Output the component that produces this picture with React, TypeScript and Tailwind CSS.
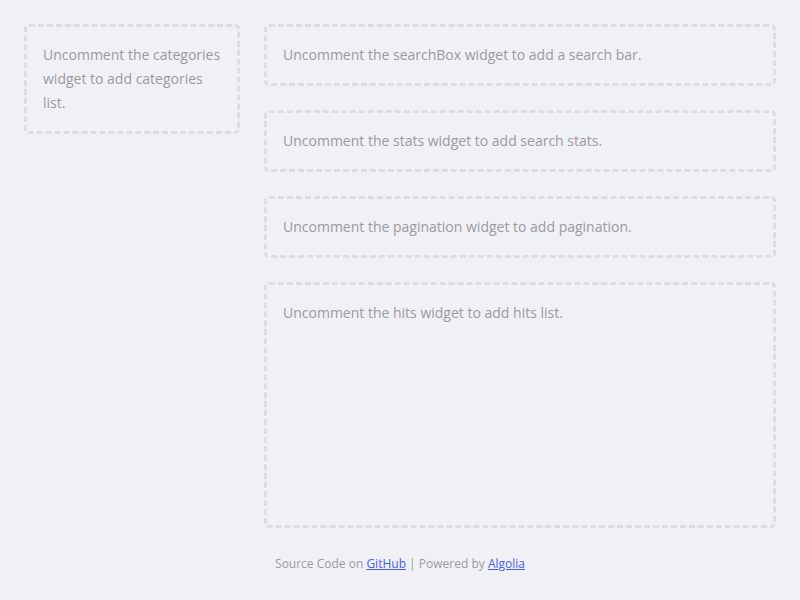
const Placeholder = ({ children, className = "" }: { children: React.ReactNode; className?: string }) => (
  <div
    className={`rounded-[5px] border-[3px] border-dashed border-[#dcdde2] p-4 text-sm leading-6 text-[#9a9aa0] ${className}`}
  >
    {children}
  </div>
);

export default function App() {
  return (
    <div
      className="min-h-screen bg-[#f0f1f5] p-6"
      style={{ fontFamily: '"Open Sans", "Noto Sans", sans-serif' }}
    >
      <div className="flex gap-6">
        <div className="w-[216px] shrink-0">
          <Placeholder>Uncomment the categories widget to add categories list.</Placeholder>
        </div>
        <div className="flex flex-1 flex-col gap-6">
          <Placeholder>Uncomment the searchBox widget to add a search bar.</Placeholder>
          <Placeholder>Uncomment the stats widget to add search stats.</Placeholder>
          <Placeholder>Uncomment the pagination widget to add pagination.</Placeholder>
          <Placeholder className="h-[246px]">Uncomment the hits widget to add hits list.</Placeholder>
        </div>
      </div>
      <footer className="mt-6 text-center text-xs leading-6 text-[#9a9aa0]">
        Source Code on{" "}
        <a href="#" className="text-[#4a5ce8] underline">
          GitHub
        </a>{" "}
        | Powered by{" "}
        <a href="#" className="text-[#4a5ce8] underline">
          Algolia
        </a>
      </footer>
    </div>
  );
}
